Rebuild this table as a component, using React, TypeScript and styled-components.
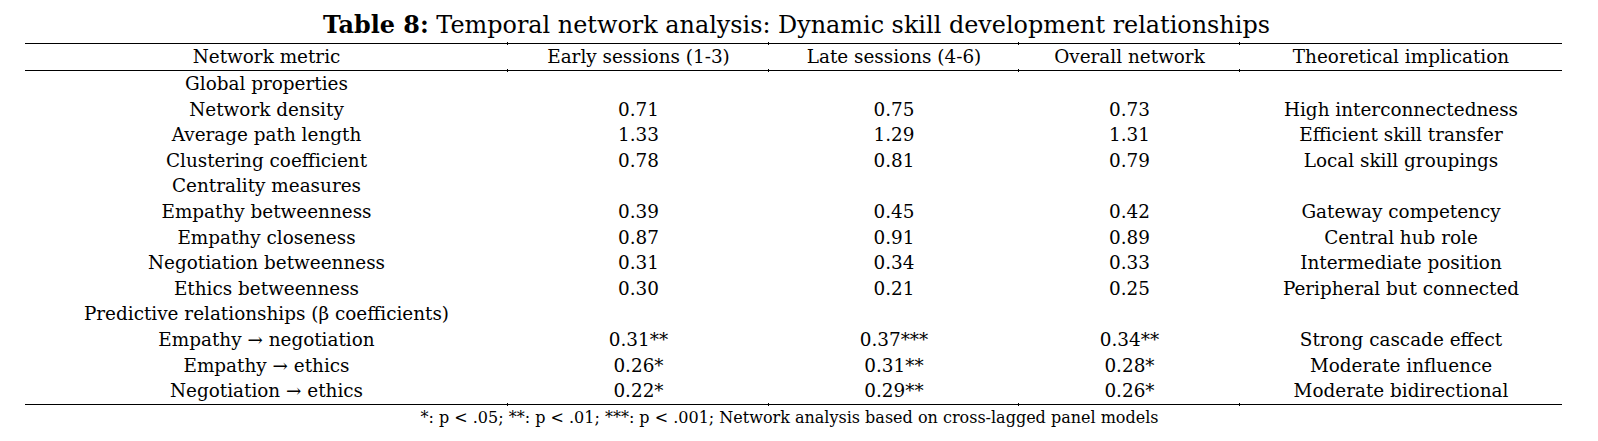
import React from "react";
import styled, { createGlobalStyle } from "styled-components";

const Global = createGlobalStyle`
  html, body {
    margin: 0;
    padding: 0;
    background: #ffffff;
  }
  body {
    font-family: "DejaVu Serif", "Liberation Serif", serif;
    color: #000000;
  }
`;

const Page = styled.div`
  padding: 0 0 0 25px;
  width: 1537px;
`;

const Table = styled.table`
  width: 1537px;
  table-layout: fixed;
  border-collapse: collapse;
  font-size: 18.4px;
`;

const Caption = styled.caption`
  caption-side: top;
  text-align: center;
  font-size: 23.9px;
  line-height: 30px;
  padding: 10px 0 3px 6px;
  white-space: nowrap;
`;

const Bold = styled.b`
  font-weight: 700;
`;

const Head = styled.thead`
  border-top: 1px solid #000;
  border-bottom: 1px solid #000;
`;

const Body = styled.tbody`
  border-bottom: 1px solid #000;
`;

const Foot = styled.tfoot``;

const HeadCell = styled.th<{ $tick?: boolean }>`
  position: relative;
  font-weight: 400;
  text-align: center;
  padding: 0;
  height: 26px;
  line-height: 26px;
  white-space: nowrap;

  &::before,
  &::after {
    content: "";
    display: ${(p) => (p.$tick ? "block" : "none")};
    position: absolute;
    left: -1px;
    width: 1px;
    height: 3px;
    background: #000;
  }
  &::before {
    top: -2px;
  }
  &::after {
    bottom: -2px;
  }
`;

const Cell = styled.td<{ $tick?: boolean }>`
  position: relative;
  text-align: center;
  padding: 0;
  height: 25.6px;
  line-height: 25.6px;
  white-space: nowrap;

  &::after {
    content: "";
    display: ${(p) => (p.$tick ? "block" : "none")};
    position: absolute;
    left: -1px;
    bottom: -2px;
    width: 1px;
    height: 3px;
    background: #000;
  }
`;

const Note = styled.td`
  text-align: center;
  font-size: 16px;
  line-height: 20px;
  padding: 3px 8px 0 0;
  white-space: nowrap;
`;

type Row =
  | { kind: "section"; label: string }
  | { kind: "data"; label: string; early: string; late: string; overall: string; implication: string };

const rows: Row[] = [
  { kind: "section", label: "Global properties" },
  { kind: "data", label: "Network density", early: "0.71", late: "0.75", overall: "0.73", implication: "High interconnectedness" },
  { kind: "data", label: "Average path length", early: "1.33", late: "1.29", overall: "1.31", implication: "Efficient skill transfer" },
  { kind: "data", label: "Clustering coefficient", early: "0.78", late: "0.81", overall: "0.79", implication: "Local skill groupings" },
  { kind: "section", label: "Centrality measures" },
  { kind: "data", label: "Empathy betweenness", early: "0.39", late: "0.45", overall: "0.42", implication: "Gateway competency" },
  { kind: "data", label: "Empathy closeness", early: "0.87", late: "0.91", overall: "0.89", implication: "Central hub role" },
  { kind: "data", label: "Negotiation betweenness", early: "0.31", late: "0.34", overall: "0.33", implication: "Intermediate position" },
  { kind: "data", label: "Ethics betweenness", early: "0.30", late: "0.21", overall: "0.25", implication: "Peripheral but connected" },
  { kind: "section", label: "Predictive relationships (β coefficients)" },
  { kind: "data", label: "Empathy → negotiation", early: "0.31**", late: "0.37***", overall: "0.34**", implication: "Strong cascade effect" },
  { kind: "data", label: "Empathy → ethics", early: "0.26*", late: "0.31**", overall: "0.28*", implication: "Moderate influence" },
  { kind: "data", label: "Negotiation → ethics", early: "0.22*", late: "0.29**", overall: "0.26*", implication: "Moderate bidirectional" },
];

const widths = [483, 261, 250, 221, 322];
const headers = ["Network metric", "Early sessions (1-3)", "Late sessions (4-6)", "Overall network", "Theoretical implication"];

export default function App() {
  return (
    <>
      <Global />
      <Page>
        <Table>
          <Caption>
            <Bold>Table 8:</Bold> Temporal network analysis: Dynamic skill development relationships
          </Caption>
          <colgroup>
            {widths.map((w, i) => (
              <col key={i} style={{ width: w }} />
            ))}
          </colgroup>
          <Head>
            <tr>
              {headers.map((h, i) => (
                <HeadCell key={h} $tick={i > 0}>
                  {h}
                </HeadCell>
              ))}
            </tr>
          </Head>
          <Body>
            {rows.map((r, idx) => {
              const last = idx === rows.length - 1;
              const vals =
                r.kind === "section"
                  ? [r.label, "", "", "", ""]
                  : [r.label, r.early, r.late, r.overall, r.implication];
              return (
                <tr key={idx}>
                  {vals.map((v, i) => (
                    <Cell key={i} $tick={last && i > 0}>
                      {v}
                    </Cell>
                  ))}
                </tr>
              );
            })}
          </Body>
          <Foot>
            <tr>
              <Note colSpan={5}>
                *: p &lt; .05; **: p &lt; .01; ***: p &lt; .001; Network analysis based on cross-lagged panel models
              </Note>
            </tr>
          </Foot>
        </Table>
      </Page>
    </>
  );
}
